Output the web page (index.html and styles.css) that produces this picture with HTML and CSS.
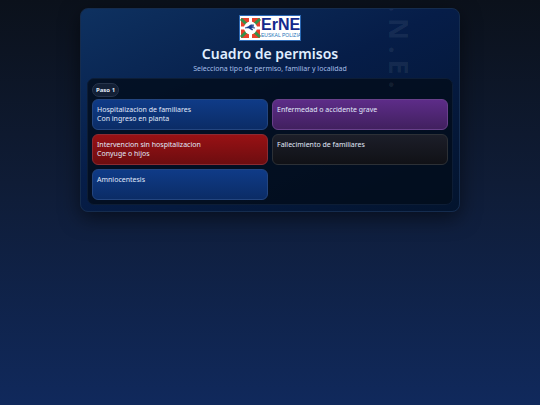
FILE: index.html
```html
<!DOCTYPE html>
<html lang="es">
<head>
<meta charset="UTF-8">
<title>Cuadro de permisos</title>
<meta name="viewport" content="width=device-width, initial-scale=1">
<link rel="stylesheet" href="styles.css">
</head>
<body>

<main class="card">
  <div class="watermark" aria-hidden="true">E.R.N.E.</div>

  <header class="header">
    <svg class="logo" viewBox="0 0 62 26" role="img" aria-label="ErNE Euskal Polizia">
      <rect width="62" height="26" fill="#2c68b4"/>
      <rect x="1" y="1" width="60" height="24" fill="#fff"/>
      <!-- ikurrina -->
      <rect x="2" y="3" width="19" height="20" fill="#e8402a"/>
      <path d="M2 4l19 18M21 4L2 22" stroke="#36904a" stroke-width="3"/>
      <path d="M11.500 3v20M2 13h19" stroke="#fff" stroke-width="3"/>
      <circle cx="11.500" cy="13" r="6.500" fill="#fff"/>
      <path d="M6 13c2-1 3-1 4-2 2-2 4-1 5-1l-3 1h3l-3 1 4 1h-4l2 2c-3 0-3-2-5-2z" fill="#173c8c" stroke="#173c8c" stroke-width=".5"/>
      <text class="logo-name" x="22" y="15" fill="#14298c">ErNE</text>
      <text class="logo-sub" x="22" y="22" fill="#1f76ba">EUSKAL POLIZIA</text>
    </svg>
    <h1>Cuadro de permisos</h1>
    <p>Selecciona tipo de permiso, familiar y localidad</p>
  </header>

  <section class="panel">
    <div class="step">Paso 1</div>
    <div class="grid">
      <button type="button" class="option blue">Hospitalizacion de familiares<br>Con ingreso en planta</button>
      <button type="button" class="option purple">Enfermedad o accidente grave</button>
      <button type="button" class="option red">Intervencion sin hospitalizacion<br>Conyuge o hijos</button>
      <button type="button" class="option black">Fallecimiento de familiares</button>
      <button type="button" class="option blue">Amniocentesis</button>
    </div>
  </section>
</main>

</body>
</html>
```
FILE: styles.css
```css
* {
  box-sizing: border-box;
}

body {
  margin: 0;
  min-height: 100vh;
  padding: 8px;
  font-family: "Noto Sans", sans-serif;
  color: #e5edfb;
  background: linear-gradient(180deg, #0b111b 0%, #0f1c36 45%, #10295c 100%);
}

.card {
  position: relative;
  overflow: hidden;
  max-width: 380px;
  margin: 0 auto;
  padding: 6px;
  border: 1px solid #152c4e;
  border-radius: 8px;
  background: linear-gradient(155deg, #0e3160 0%, #061d48 45%, #03142e 100%);
  box-shadow: 0 6px 20px rgba(0, 0, 0, 0.5);
}

/* vertical text over the card */
.watermark {
  position: absolute;
  z-index: 1;
  top: -63px;
  right: 42px;
  writing-mode: vertical-rl;
  font-size: 27px;
  font-weight: 700;
  line-height: 36px;
  letter-spacing: 6px;
  color: rgba(255, 255, 255, 0.07);
  pointer-events: none;
}

.header {
  position: relative;
  text-align: center;
}

.logo {
  display: block;
  width: 62px;
  height: 26px;
  margin: 0 auto 3px;
}

.logo-name {
  font: 700 16px "Liberation Sans", sans-serif;
}

.logo-sub {
  font: 5px "Liberation Sans", sans-serif;
}

h1 {
  margin: 0;
  font-size: 14px;
  font-weight: 600;
  line-height: 20px;
  color: #e0eeff;
}

.header p {
  margin: 0 0 4px;
  font-size: 7px;
  line-height: 10px;
  color: #a5bfe8;
}

.panel {
  position: relative;
  padding: 4px;
  border: 1px solid #0d1d35;
  border-radius: 7px;
  background: rgba(3, 12, 26, 0.8);
}

.step {
  width: fit-content;
  padding: 1px 3px;
  border: 1px solid #26344b;
  border-radius: 7px;
  background: #132036;
  font-size: 6px;
  font-weight: 700;
  line-height: 10px;
}

.grid {
  display: grid;
  grid-template-columns: 1fr 1fr;
  grid-auto-rows: minmax(31px, auto);
  gap: 4px;
  margin-top: 2px;
}

.option {
  display: flex;
  align-items: flex-start;
  padding: 5px 4px;
  border: 1px solid #23457f;
  border-radius: 6px;
  font-family: inherit;
  font-size: 7px;
  line-height: 9px;
  text-align: left;
  color: #e0e9fa;
  cursor: pointer;
}

.option:hover {
  filter: brightness(1.1);
}

.blue {
  background: linear-gradient(#0f3b87, #0b2c66);
}

.purple {
  border-color: #68408a;
  background: linear-gradient(#5d2c88, #41205f);
}

.red {
  border-color: #8b2b32;
  background: linear-gradient(#981114, #6d0d10);
}

.black {
  border-color: #2c3036;
  background: linear-gradient(#1c1e29, #101116);
}

@media (max-width: 300px) {
  .grid {
    grid-template-columns: 1fr;
  }
}
```
